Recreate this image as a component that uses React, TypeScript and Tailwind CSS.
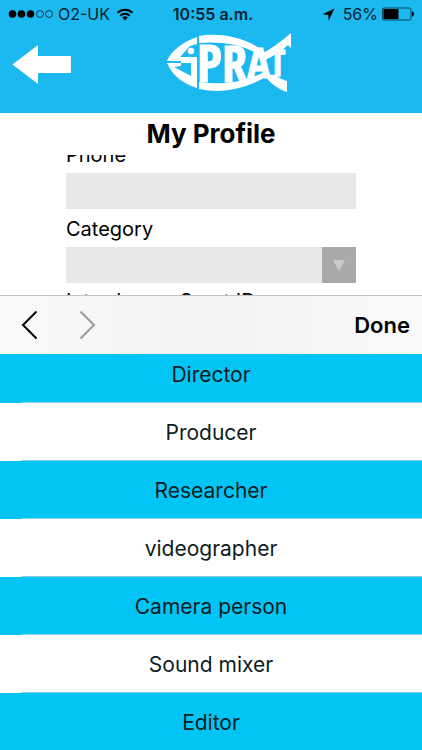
import { useState } from "react";

const categories = [
  "Director",
  "Producer",
  "Researcher",
  "videographer",
  "Camera person",
  "Sound mixer",
  "Editor",
];

function StatusBar() {
  return (
    <div className="grid grid-cols-[1fr_auto_1fr] items-center h-7 px-2 text-base text-[#06222e]">
      <div className="flex items-center gap-1">
        <svg width="46" height="10" viewBox="0 0 46 10" aria-hidden="true">
          <g fill="#000">
            <circle cx="4.5" cy="5" r="3.8" />
            <circle cx="13.5" cy="5" r="3.8" />
            <circle cx="22.5" cy="5" r="3.8" />
          </g>
          <g fill="none" stroke="#06222e" strokeWidth="0.8">
            <circle cx="32" cy="5" r="3.5" />
            <circle cx="41" cy="5" r="3.5" />
          </g>
        </svg>
        <span>O2-UK</span>
        <svg className="ml-0.5" width="18" height="13" viewBox="0 0 18 13" fill="none" stroke="#000" strokeWidth="2" aria-hidden="true">
          <path d="M1.5 4.8a10.6 10.6 0 0 1 15 0" />
          <path d="M4.3 7.7a6.6 6.6 0 0 1 9.4 0" />
          <path d="M9 12.5L6.2 9.6a4 4 0 0 1 5.6 0z" fill="#000" stroke="none" />
        </svg>
      </div>
      <span className="pl-1 font-semibold">10:55 a.m.</span>
      <div className="flex items-center justify-end gap-1">
        <svg className="mr-1" width="13" height="13" viewBox="0 0 13 13" aria-hidden="true">
          <path d="M12.5 0.5L0.5 6.3l5.7.6.5 5.8z" />
        </svg>
        <span>56%</span>
        <svg width="32" height="14" viewBox="0 0 32 14" aria-hidden="true">
          <rect x="0.5" y="1" width="28.5" height="12" rx="1.5" fill="none" stroke="#06222e" strokeWidth="0.8" />
          <rect x="1.5" y="2" width="15" height="10" />
          <path d="M30 4.5c2.6.6 2.6 4.4 0 5z" />
        </svg>
      </div>
    </div>
  );
}

function SpratLogo() {
  return (
    <svg
      width="128"
      height="74"
      viewBox="0 -4 128 74"
      className="overflow-visible"
      fill="#fff"
      fontFamily='"Open Sans Condensed", "Roboto Condensed", "Liberation Sans Narrow", "DejaVu Sans Condensed", sans-serif'
      fontWeight="bold"
      role="img"
      aria-label="Sprat"
    >
      {/* head */}
      <path d="M32 5C20 9 6 18 2 29h14v2H2C7 43 18 52 32 56V25H15L25 14l7-2z" />
      <path d="M16 31v3l-7 1 17 9V31z" fill="#1cb9f1" />
      <circle cx="26" cy="19" r="3.2" />
      {/* back and belly */}
      <path d="M34 4C50 1 78 3 100 20l-3 4C78 12 54 9 34 11z" />
      <path d="M34 57C58 62 82 57 104 43l-5-3C78 51 56 53 34 50z" />
      {/* body */}
      <text x="32" y="50" stroke="#fff" strokeWidth="1">
        <tspan fontSize="52">P</tspan>
        <tspan fontSize="51">R</tspan>
        <tspan fontSize="42" dy="-4">A</tspan>
        <tspan fontSize="36" dy="-2">T</tspan>
      </text>
      {/* tail */}
      <path d="M92 25C104 18 116 10 126 1v15l-3-3c-8 7-14 11-23 15z" />
      <path d="M99 42l12 1c3 3 7 5 11 6v11c-9-3-18-9-23-18z" />
    </svg>
  );
}

export default function App() {
  const [category, setCategory] = useState("");

  return (
    <div className={'flex flex-col h-screen bg-white text-black font-["Inter","Liberation_Sans",sans-serif]'}>
      <header className="shrink-0 h-[113px] bg-[#1cb9f1]">
        <StatusBar />
        <div className="grid grid-cols-[1fr_auto_1fr] items-start px-3">
          <button aria-label="Back" className="justify-self-start pt-4">
            <svg width="60" height="40" viewBox="0 0 60 40" fill="#fff">
              <path d="M0.5 20.5L26 1v11h33v17H26v11z" />
            </svg>
          </button>
          <div className="pl-9">
            <SpratLogo />
          </div>
        </div>
      </header>

      <h1 className="shrink-0 h-[42px] text-[26px] leading-[42px] font-bold text-center">My Profile</h1>

      <form className="shrink-0 h-[140px] px-[66px] overflow-hidden">
        <div className="-mt-5 text-xl leading-8">
          <label htmlFor="phone" className="block pt-1 pb-0.5">Phone</label>
          <input id="phone" type="tel" className="block w-full h-9 px-2 bg-[#e8e8e8] outline-none" />
          <label htmlFor="category" className="block pt-1 pb-0.5">Category</label>
          <div className="grid">
            <select
              id="category"
              value={category}
              onChange={(e) => setCategory(e.target.value)}
              className="col-start-1 row-start-1 w-full h-9 px-2 text-base appearance-none bg-[#e8e8e8] outline-none"
            >
              <option value=""></option>
              {categories.map((c) => (
                <option key={c}>{c}</option>
              ))}
            </select>
            <div className="col-start-1 row-start-1 justify-self-end flex items-center justify-center w-[34px] h-9 bg-[#a9a9a9] pointer-events-none">
              <svg width="12" height="11" viewBox="0 0 12 11" fill="#c6ccd2" aria-hidden="true">
                <path d="M0 0h12L6 11z" />
              </svg>
            </div>
          </div>
          <label htmlFor="sprat-id" className="block pt-0.5 pb-1">Introducers Sprat ID</label>
          <input id="sprat-id" className="block w-full h-9 px-2 bg-[#e8e8e8] outline-none" />
        </div>
      </form>

      <div className="shrink-0 flex items-center h-[59px] px-3 border-t border-[#c4c4c4] bg-linear-to-r from-[#fafafa] via-[#f2f2f2] to-[#fafafa]">
        <button aria-label="Previous" className="px-2">
          <svg width="18" height="30" viewBox="0 0 18 30" fill="none" stroke="#000" strokeWidth="2">
            <path d="M16.5 1.5L3 15l13.5 13.5" />
          </svg>
        </button>
        <button aria-label="Next" className="px-2 ml-6" disabled>
          <svg width="18" height="30" viewBox="0 0 18 30" fill="none" stroke="#9b9b9b" strokeWidth="2">
            <path d="M2.5 1.5L16 15 2.5 28.5" />
          </svg>
        </button>
        <button className="ml-auto text-[22px] font-semibold">Done</button>
      </div>

      <div className="flex-1 overflow-hidden">
        <ul className="-mt-[9px]">
          {categories.map((c) => (
            <li key={c} className="odd:bg-[#03c5f5] even:bg-white">
              <button
                onClick={() => setCategory(c)}
                className="block w-full h-[58px] pt-0.5 text-[21px] text-[#0d1c22]"
              >
                {c}
              </button>
              <div className="-mt-px ml-[21px] h-px bg-[#8ccfe0]" />
            </li>
          ))}
        </ul>
      </div>
    </div>
  );
}
